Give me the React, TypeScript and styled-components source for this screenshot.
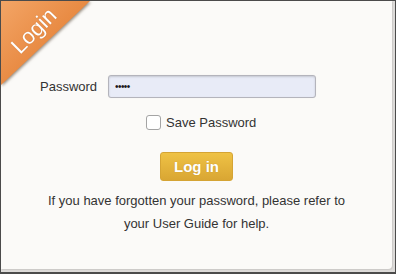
import styled, { createGlobalStyle } from "styled-components";

const GlobalStyle = createGlobalStyle`
  html, body {
    margin: 0;
    padding: 0;
  }
  body {
    font-family: "Liberation Sans", Arial, sans-serif;
    background: #ffffff;
  }
`;

const Frame = styled.div`
  position: relative;
  box-sizing: border-box;
  width: 396px;
  height: 274px;
  display: flex;
  overflow: hidden;
  background: #dddbd9;
  border: 1px solid #4b4b4b;
  border-bottom-width: 2px;
`;

const Panel = styled.main`
  flex: 1;
  display: flex;
  flex-direction: column;
  align-items: center;
  margin: 0 3px 3px 0;
  padding-top: 74px;
  background: #fbfaf8;
  border-radius: 0 0 4px 0;
  box-shadow: 1px 1px 1px rgba(0, 0, 0, 0.08);
`;

const Ribbon = styled.div`
  position: absolute;
  top: 0;
  left: 0;
  width: 94px;
  height: 90px;
  filter: drop-shadow(1px 1px 1.5px rgba(60, 40, 20, 0.55));
  pointer-events: none;
`;

const RibbonShape = styled.div`
  position: absolute;
  inset: 0;
  clip-path: polygon(0 0, 89px 0, 0 84px);
  background: linear-gradient(135deg, #f3a566 0%, #e98c45 45%, #d9772f 100%);
`;

const RibbonText = styled.span`
  position: absolute;
  left: 2px;
  top: 18px;
  width: 62px;
  text-align: center;
  transform: rotate(-45deg);
  transform-origin: 50% 50%;
  color: #ffffff;
  font-size: 22px;
  line-height: 24px;
  text-shadow: 0 0 1px rgba(120, 60, 10, 0.4);
`;

const FieldRow = styled.div`
  align-self: stretch;
  display: flex;
  align-items: center;
  gap: 11px;
  padding-left: 39px;
`;

const FieldLabel = styled.label`
  color: #333333;
  font-size: 13px;
`;

const PasswordInput = styled.input`
  box-sizing: border-box;
  width: 208px;
  height: 23px;
  padding: 0 6px;
  margin: 0;
  font-family: "Liberation Sans", Arial, sans-serif;
  font-size: 10px;
  letter-spacing: -0.6px;
  color: #1a1a1a;
  background: #e8ebf7;
  border: 1px solid #b4b4bc;
  border-radius: 3px;
  box-shadow: inset 0 1px 2px rgba(0, 0, 0, 0.15), 0 0 1px rgba(0, 0, 0, 0.1);
  outline: none;
`;

const CheckRow = styled.label`
  align-self: stretch;
  display: flex;
  align-items: center;
  gap: 5px;
  margin-top: 17px;
  padding-left: 145px;
  color: #333333;
  font-size: 13px;
`;

const CheckBox = styled.input`
  appearance: none;
  box-sizing: border-box;
  width: 15px;
  height: 15px;
  margin: 0;
  background: #ffffff;
  border: 1px solid #a4a4a4;
  border-radius: 3px;
`;

const SubmitButton = styled.button`
  box-sizing: border-box;
  width: 73px;
  height: 29px;
  margin-top: 22px;
  padding: 0;
  font-family: "Liberation Sans", Arial, sans-serif;
  font-size: 15px;
  font-weight: 700;
  color: #ffffff;
  background: linear-gradient(#efc245, #d9a633);
  border: 1px solid #d5a434;
  border-radius: 3px;
  text-shadow: 0 0 1px rgba(140, 90, 0, 0.4);
  cursor: pointer;
`;

const HelpText = styled.p`
  width: 300px;
  margin: 8px 0 0;
  color: #333333;
  font-size: 13px;
  line-height: 23px;
  text-align: center;
`;

export default function App() {
  return (
    <>
      <GlobalStyle />
      <Frame>
        <Panel>
          <FieldRow>
            <FieldLabel htmlFor="pw">Password</FieldLabel>
            <PasswordInput id="pw" type="password" value="12345" readOnly />
          </FieldRow>
          <CheckRow>
            <CheckBox type="checkbox" />
            Save Password
          </CheckRow>
          <SubmitButton>Log in</SubmitButton>
          <HelpText>
            If you have forgotten your password, please refer to your User Guide for help.
          </HelpText>
        </Panel>
        <Ribbon>
          <RibbonShape />
          <RibbonText>Login</RibbonText>
        </Ribbon>
      </Frame>
    </>
  );
}
